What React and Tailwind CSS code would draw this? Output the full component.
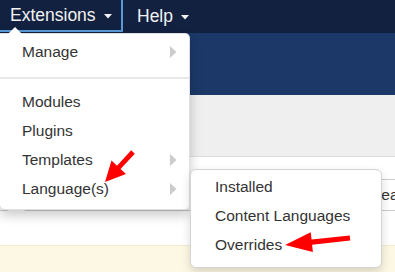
const Caret = () => (
  <svg width="8" height="5" viewBox="0 0 8 5" className="ml-[8px] mt-[2px]">
    <path d="M0 0h8L4 4.5z" fill="currentColor" />
  </svg>
);

const SubArrow = () => (
  <svg width="7" height="12" viewBox="0 0 7 12" className="absolute right-[12px] top-[9px]">
    <path d="M0 0L6.5 6L0 12z" fill="#cccccc" />
  </svg>
);

const Item = ({ label, sub, pad = "pl-[22px]" }) => (
  <div className={`relative h-[29px] flex items-center ${pad} text-[#333] text-[15.5px]`}>
    {label}
    {sub && <SubArrow />}
  </div>
);

export default function App() {
  return (
    <div className="relative w-[395px] h-[272px] overflow-hidden bg-white font-['Liberation_Sans',Arial,sans-serif]">
      {/* top nav */}
      <div className="flex h-[33px] bg-[#132140] text-[#f2f2f2] text-[17.5px]">
        <div className="flex items-center w-[123px] h-[32px] pl-[10px] border-r-2 border-b-2 border-[#5a9ad6]">
          Extensions
          <Caret />
        </div>
        <div className="flex items-center pl-[14px] h-[32px]">
          Help
          <Caret />
        </div>
      </div>

      {/* page header band */}
      <div className="h-[62px] bg-[#1b3868]" />
      <div className="h-[62px] bg-[#efefef] border-b border-[#dcdcdc]" />

      {/* filter row */}
      <div className="flex items-start gap-[12px] pt-[22px] h-[88px]">
        <div className="w-[10px] h-[32px] border border-[#cccccc] rounded-r-[4px] border-l-0" />
        <div className="flex-1 h-[32px] border border-[#cccccc] rounded-[4px]" />
        <div className="w-[35px] shrink-0 h-[32px] -ml-[10px] flex items-center pl-[10px] whitespace-nowrap border border-[#cccccc] border-r-0 rounded-l-[4px] text-[15.5px] text-[#333]">
          Search
        </div>
      </div>
      <div className="h-[40px] bg-[#fcf8e3] border-t border-[#f3ecd0]" />

      {/* Extensions dropdown */}
      <div className="absolute left-0 top-[33px] w-[190px] h-[177px] bg-white rounded-tr-[5px] rounded-b-[5px] border border-[rgba(0,0,0,0.12)] border-l-0 shadow-[0_5px_12px_rgba(0,0,0,0.22)] pt-[3px]">
        <svg width="16" height="8" viewBox="0 0 16 8" className="absolute left-[7px] -top-[7px]">
          <path d="M0 8L8 0L16 8z" fill="#ffffff" />
        </svg>
        <Item label="Manage" sub />
        <div className="mt-[11px] mb-[8px] h-[2px] bg-[#e8e8e8]" />
        <Item label="Modules" />
        <Item label="Plugins" />
        <Item label="Templates" sub />
        <Item label="Language(s)" sub />
      </div>

      {/* Language submenu */}
      <div className="absolute left-[190px] top-[169px] w-[192px] h-[99px] bg-white rounded-[6px] border border-[#d4d4d4] shadow-[0_4px_10px_rgba(0,0,0,0.15)] pt-[2px]">
        <Item label="Installed" pad="pl-[24px]" />
        <Item label="Content Languages" pad="pl-[24px]" />
        <Item label="Overrides" pad="pl-[24px]" />
      </div>

      {/* annotation arrows */}
      <svg width="395" height="272" className="absolute inset-0 pointer-events-none">
        <polygon
          points="134.8,153.7 131.2,150.3 117,165.8 111.5,160.5 105,182 126,174 120.5,169"
          fill="#ff0000"
        />
        <polygon
          points="350.3,240.5 349.7,235.5 311.6,239.4 310.7,232.2 285,245 312.9,252 312.1,244.8"
          fill="#ff0000"
        />
      </svg>
    </div>
  );
}
